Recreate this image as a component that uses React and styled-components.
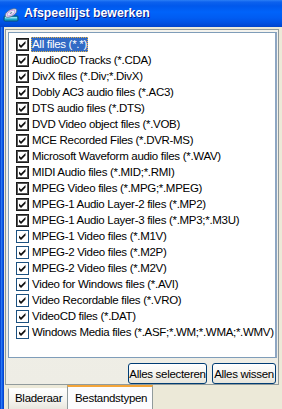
import React from "react";
import styled, { createGlobalStyle } from "styled-components";

const GlobalStyle = createGlobalStyle`
  html, body {
    margin: 0;
    padding: 0;
  }

  body {
    width: 282px;
    height: 409px;
    overflow: hidden;
    background: #ece9d8;
    font-family: "Liberation Sans", Arial, sans-serif;
    font-size: 11.5px;
    letter-spacing: -0.3px;
    color: #000;
  }
`;

const StyledWindow = styled.div`
  width: 282px;
  height: 409px;
  display: flex;
  flex-direction: column;
  overflow: hidden;
`;

const StyledTitleBar = styled.div`
  flex: none;
  height: 27px;
  display: flex;
  align-items: center;
  gap: 5px;
  padding-left: 3px;
  background: linear-gradient(
    to bottom,
    #2b7ff5 0px,
    #0d62ee 2px,
    #0058ec 6px,
    #0063fa 12px,
    #005cf2 18px,
    #0050e2 23px,
    #0043cc 27px
  );

  .title {
    color: #fff;
    font-weight: bold;
    font-size: 12.3px;
    letter-spacing: 0;
    text-shadow: 1px 1px 0 #0a1c8a;
    padding-bottom: 1px;
  }
`;

const StyledFrame = styled.div`
  flex: 1;
  display: flex;
  min-height: 0;
`;

const StyledFrameEdge = styled.div`
  flex: none;
  width: 4px;
  background: linear-gradient(
    to right,
    #0a4bd6 0 1px,
    #2a78f2 1px 2px,
    #0c5ae8 2px 3px,
    #0646d0 3px 4px
  );
`;

const StyledClient = styled.div`
  flex: 1;
  display: flex;
  flex-direction: column;
  padding: 2px 3px 0 1px;
  min-width: 0;
`;

const StyledPanel = styled.div`
  flex: none;
  height: 356px;
  box-sizing: border-box;
  display: flex;
  flex-direction: column;
  padding: 2px 1px 0 2px;
  border: 1px solid #919b9c;
  background: linear-gradient(to bottom, #f4f3ee, #eeede5);
`;

const StyledList = styled.div`
  flex: none;
  height: 326px;
  box-sizing: border-box;
  padding-top: 3px;
  border: 1px solid #7f9db9;
  border-right: 2px solid #8ea6c2;
  background: #fff;
`;

const StyledRow = styled.div`
  height: 16px;
  display: flex;
  align-items: center;
  padding-left: 7px;
  white-space: nowrap;
`;

const StyledBox = styled.span`
  flex: none;
  width: 13px;
  height: 13px;
  box-sizing: border-box;
  border: ${(p) => (p.$classic ? "1px solid #1a1a1a" : "1px solid #1c5180")};
  box-shadow: ${(p) => (p.$classic ? "inset 0 0 0 1px #555" : "none")};
  background: #fff;
  display: flex;

  svg {
    width: 11px;
    height: 11px;
  }
`;

const StyledLabel = styled.span`
  margin-left: 2px;
  padding: 0 1px;
  height: 15px;
  line-height: 15px;
  box-sizing: border-box;
  background: ${(p) => (p.$selected ? "#316ac5" : "transparent")};
  color: ${(p) => (p.$selected ? "#fff" : "#000")};
  outline: ${(p) => (p.$selected ? "1px dotted #e2b24a" : "none")};
  outline-offset: -1px;
`;

const StyledButtons = styled.div`
  flex: none;
  display: flex;
  justify-content: flex-end;
  gap: 5px;
  margin-top: 5px;
  padding-right: 1px;
`;

const StyledButton = styled.button`
  width: ${(p) => p.$width}px;
  height: 21px;
  padding: 0;
  border: 1px solid #003c74;
  border-radius: 3px;
  background: linear-gradient(to bottom, #ffffff, #f5f4ef 55%, #e6e4da);
  font-family: "Liberation Sans", Arial, sans-serif;
  font-size: 11.5px;
  letter-spacing: -0.3px;
  color: #000;
`;

const StyledTabs = styled.div`
  flex: none;
  display: flex;
  align-items: flex-start;
  padding-left: 3px;
`;

const StyledTab = styled.div`
  box-sizing: border-box;
  width: ${(p) => p.$width}px;
  height: ${(p) => (p.$active ? 24 : 21)}px;
  margin-top: ${(p) => (p.$active ? 0 : 3)}px;
  padding: ${(p) => (p.$active ? "4px 0 0 7px" : "2px 0 0 6px")};
  border-left: 1px solid #919b9c;
  border-right: ${(p) => (p.$active ? "1px solid #919b9c" : "none")};
  border-top: ${(p) => (p.$active ? "2px solid #f4a53a" : "1px solid #fdfdfb")};
  background: ${(p) =>
    p.$active
      ? "#fcfcfe"
      : "linear-gradient(to bottom, #fefefe, #f4f3ee 60%, #e9e7de)"};
  line-height: 15px;
`;

const Check = () => (
  <svg viewBox="0 0 11 11">
    <path d="M2 4.5 L4 6.5 L8.5 2 L8.5 4.5 L4 9 L2 7 Z" fill="#111" />
  </svg>
);

const AppIcon = () => (
  <svg width="16" height="16" viewBox="0 0 16 16">
    <rect x="1" y="10" width="14" height="5" rx="1" fill="#1aa7c9" stroke="#0b4f7a" />
    <rect x="2" y="11" width="12" height="1.5" fill="#8fe3f3" />
    <g transform="rotate(-30 8 7)">
      <ellipse cx="8" cy="7" rx="6.5" ry="3.2" fill="#e8eef7" stroke="#5a6d8c" strokeWidth="0.8" />
      <ellipse cx="8" cy="7" rx="4.5" ry="2" fill="none" stroke="#c58ae0" strokeWidth="0.8" />
      <ellipse cx="8" cy="7" rx="1.4" ry="0.7" fill="#6d7fa0" />
    </g>
  </svg>
);

const fileTypes = [
  "All files (*.*)",
  "AudioCD Tracks (*.CDA)",
  "DivX files (*.Div;*.DivX)",
  "Dobly AC3 audio files (*.AC3)",
  "DTS audio files (*.DTS)",
  "DVD Video object files (*.VOB)",
  "MCE Recorded Files (*.DVR-MS)",
  "Microsoft Waveform audio files (*.WAV)",
  "MIDI Audio files (*.MID;*.RMI)",
  "MPEG Video files (*.MPG;*.MPEG)",
  "MPEG-1 Audio Layer-2 files (*.MP2)",
  "MPEG-1 Audio Layer-3 files (*.MP3;*.M3U)",
  "MPEG-1 Video files (*.M1V)",
  "MPEG-2 Video files (*.M2P)",
  "MPEG-2 Video files (*.M2V)",
  "Video for Windows files (*.AVI)",
  "Video Recordable files (*.VRO)",
  "VideoCD files (*.DAT)",
  "Windows Media files (*.ASF;*.WM;*.WMA;*.WMV)",
];

const FileTypeRow = ({ name, index }) => (
  <StyledRow>
    <StyledBox $classic={index < 12}>
      <Check />
    </StyledBox>
    <StyledLabel $selected={index === 0}>{name}</StyledLabel>
  </StyledRow>
);

const App = () => {
  return (
    <StyledWindow>
      <GlobalStyle />
      <StyledTitleBar>
        <AppIcon />
        <span className="title">Afspeellijst bewerken</span>
      </StyledTitleBar>
      <StyledFrame>
        <StyledFrameEdge />
        <StyledClient>
          <StyledPanel>
            <StyledList>
              {fileTypes.map((name, i) => (
                <FileTypeRow key={name + i} name={name} index={i} />
              ))}
            </StyledList>
            <StyledButtons>
              <StyledButton $width={79}>Alles selecteren</StyledButton>
              <StyledButton $width={64}>Alles wissen</StyledButton>
            </StyledButtons>
          </StyledPanel>
          <StyledTabs>
            <StyledTab $width={59}>Bladeraar</StyledTab>
            <StyledTab $width={86} $active>
              Bestandstypen
            </StyledTab>
          </StyledTabs>
        </StyledClient>
      </StyledFrame>
    </StyledWindow>
  );
};

export default App;
